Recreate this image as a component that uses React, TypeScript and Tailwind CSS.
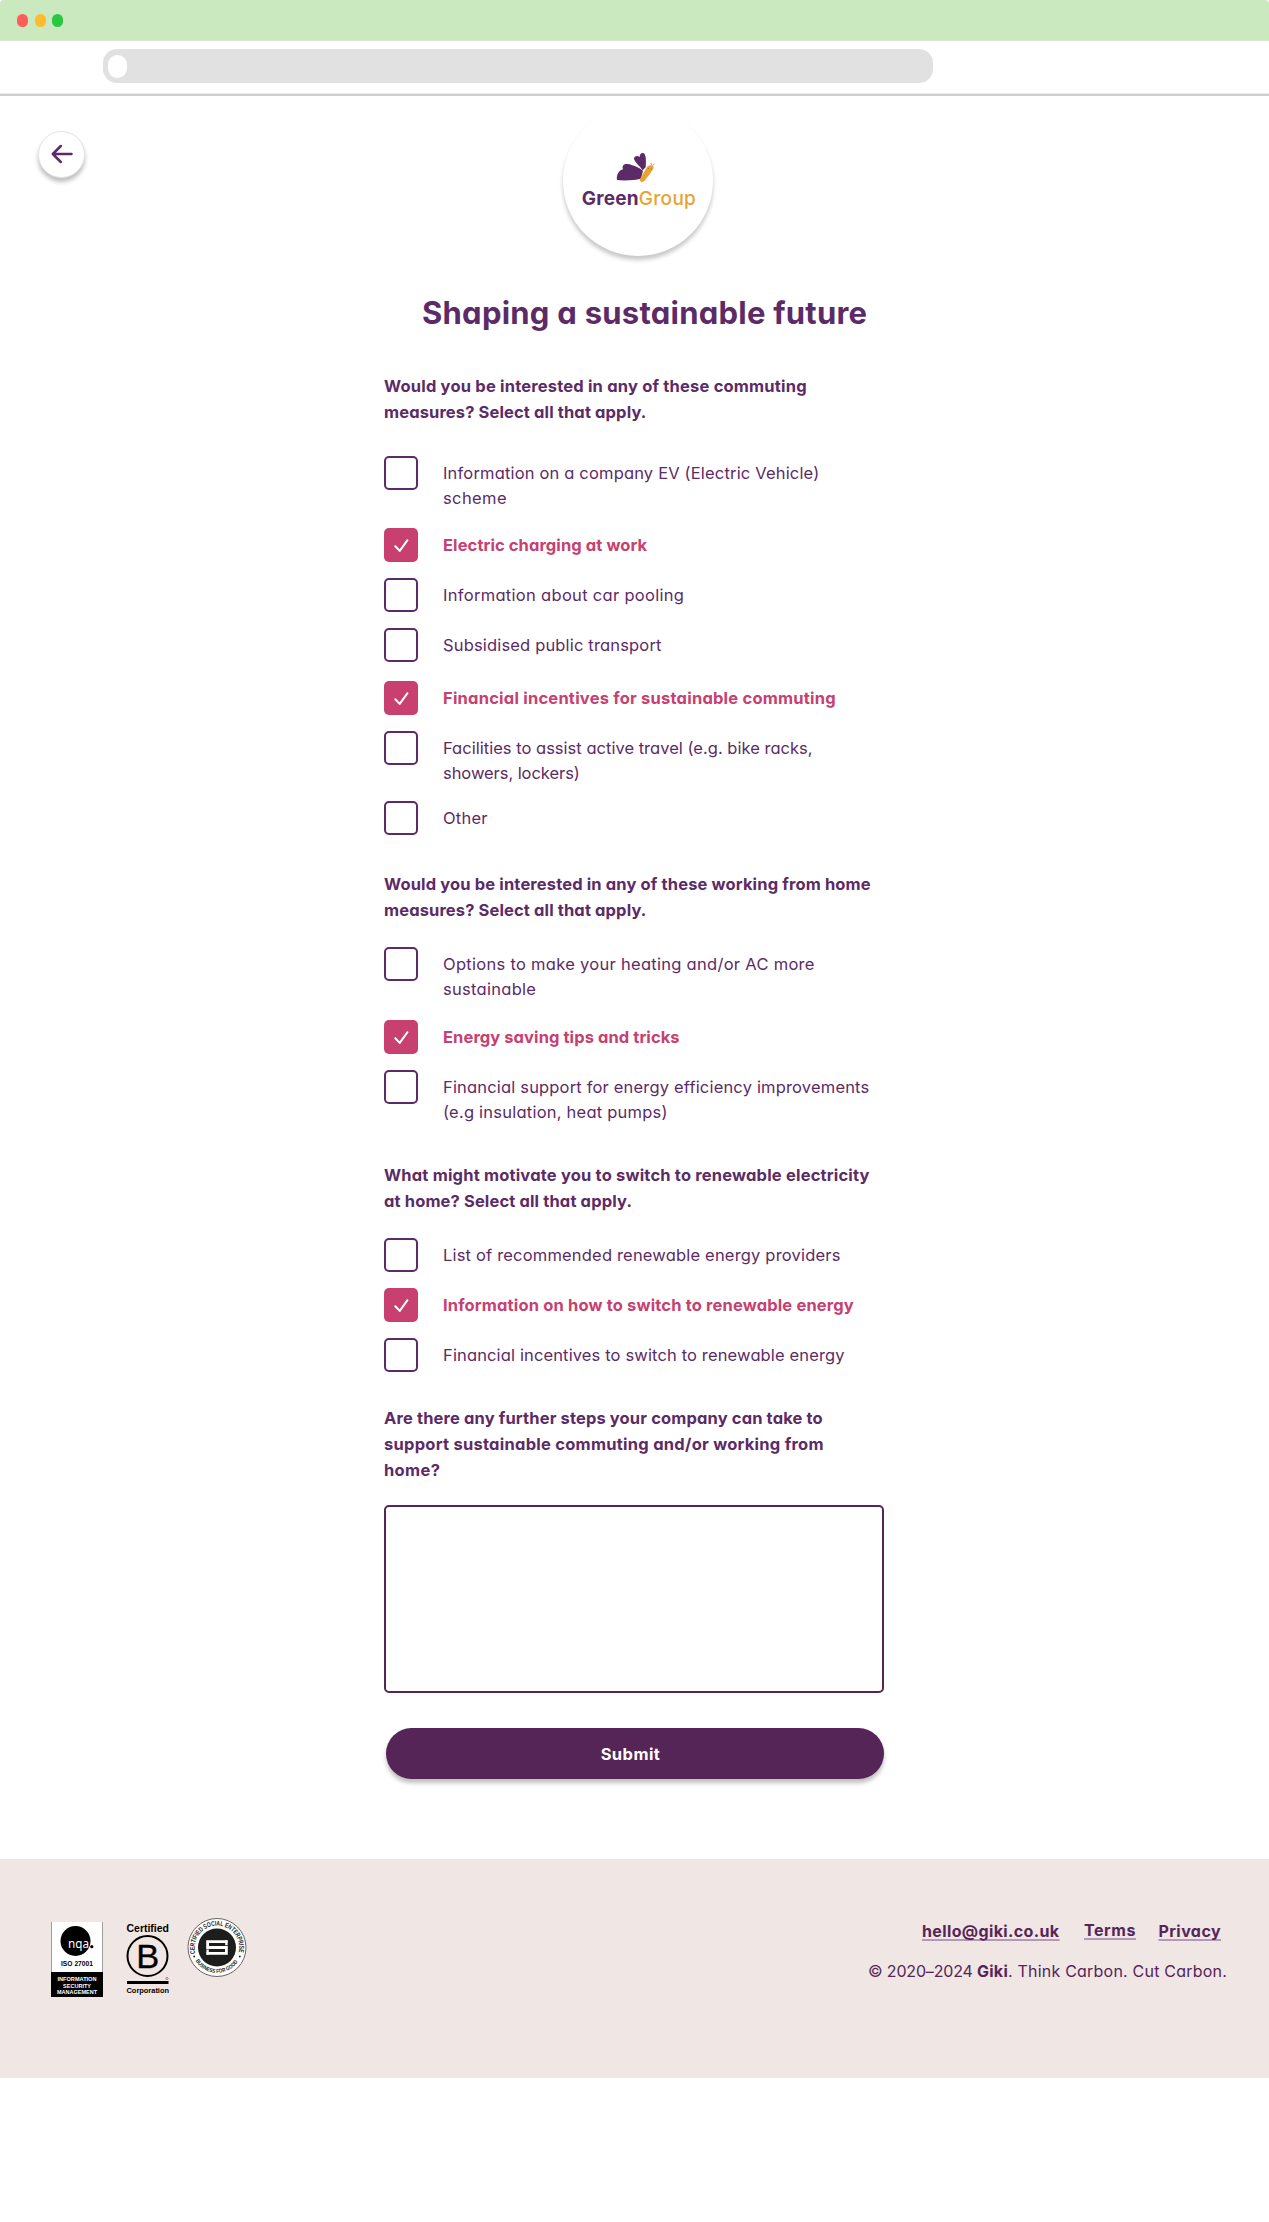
import { useState } from "react";

type TextLine = { text: string; tracking: string };
type Option = { id: string; top: string; checked?: boolean; lines: TextLine[] };
type Question = { id: string; top: string; title: TextLine[]; options: Option[] };

const QUESTIONS: Question[] = [
  {
    id: "commuting",
    top: "mt-[39.5px]",
    title: [
      { text: "Would you be interested in any of these commuting", tracking: "tracking-[0.19px]" },
      { text: "measures? Select all that apply.", tracking: "tracking-[0.123px]" },
    ],
    options: [
      {
        id: "ev",
        top: "mt-[31.5px]",
        lines: [
          { text: "Information on a company EV (Electric Vehicle)", tracking: "tracking-[0.172px]" },
          { text: "scheme", tracking: "tracking-[0.4px]" },
        ],
      },
      {
        id: "charging",
        top: "mt-[17px]",
        checked: true,
        lines: [{ text: "Electric charging at work", tracking: "tracking-[0.087px]" }],
      },
      {
        id: "pooling",
        top: "mt-4",
        lines: [{ text: "Information about car pooling", tracking: "tracking-[0.306px]" }],
      },
      {
        id: "transport",
        top: "mt-4",
        lines: [{ text: "Subsidised public transport", tracking: "tracking-[0.167px]" }],
      },
      {
        id: "incentives",
        top: "mt-[19px]",
        checked: true,
        lines: [{ text: "Financial incentives for sustainable commuting", tracking: "tracking-[0.217px]" }],
      },
      {
        id: "active",
        top: "mt-4",
        lines: [
          { text: "Facilities to assist active travel (e.g. bike racks,", tracking: "tracking-[0.02px]" },
          { text: "showers, lockers)", tracking: "tracking-[-0.06px]" },
        ],
      },
      { id: "other", top: "mt-[15px]", lines: [{ text: "Other", tracking: "tracking-[0.244px]" }] },
    ],
  },
  {
    id: "home-working",
    top: "mt-[35.5px]",
    title: [
      { text: "Would you be interested in any of these working from home", tracking: "tracking-[0.139px]" },
      { text: "measures? Select all that apply.", tracking: "tracking-[0.123px]" },
    ],
    options: [
      {
        id: "heating",
        top: "mt-[24.5px]",
        lines: [
          { text: "Options to make your heating and/or AC more", tracking: "tracking-[0.29px]" },
          { text: "sustainable", tracking: "tracking-[0.29px]" },
        ],
      },
      {
        id: "tips",
        top: "mt-[18px]",
        checked: true,
        lines: [{ text: "Energy saving tips and tricks", tracking: "tracking-[0.084px]" }],
      },
      {
        id: "support",
        top: "mt-4",
        lines: [
          { text: "Financial support for energy efficiency improvements", tracking: "tracking-[0.175px]" },
          { text: "(e.g insulation, heat pumps)", tracking: "tracking-[0.23px]" },
        ],
      },
    ],
  },
  {
    id: "renewable",
    top: "mt-[36.5px]",
    title: [
      { text: "What might motivate you to switch to renewable electricity", tracking: "tracking-[0.184px]" },
      { text: "at home? Select all that apply.", tracking: "tracking-[0.131px]" },
    ],
    options: [
      {
        id: "providers",
        top: "mt-[24.5px]",
        lines: [{ text: "List of recommended renewable energy providers", tracking: "tracking-[0.183px]" }],
      },
      {
        id: "how-to",
        top: "mt-4",
        checked: true,
        lines: [{ text: "Information on how to switch to renewable energy", tracking: "tracking-[0.155px]" }],
      },
      {
        id: "switch-incentives",
        top: "mt-4",
        lines: [{ text: "Financial incentives to switch to renewable energy", tracking: "tracking-[0.138px]" }],
      },
    ],
  },
];

const COMMENT_TITLE: TextLine[] = [
  { text: "Are there any further steps your company can take to", tracking: "tracking-[0.136px]" },
  { text: "support sustainable commuting and/or working from", tracking: "tracking-[0.253px]" },
  { text: "home?", tracking: "tracking-[0.338px]" },
];

function Lines({ lines }: { lines: TextLine[] }) {
  return (
    <>
      {lines.map((l) => (
        <span key={l.text} className={`block whitespace-nowrap ${l.tracking}`}>
          {l.text}
        </span>
      ))}
    </>
  );
}

function BrowserBar() {
  return (
    <header>
      <div className="flex h-[41px] items-center gap-[6.5px] rounded-t-[4px] border-b border-[#d5ebcb] bg-[#cbe9bf] pl-[17px]">
        <span className="h-[13px] w-[11px] rounded-full bg-[#fc5f57]" />
        <span className="h-[13px] w-[11px] rounded-full bg-[#febb2e]" />
        <span className="h-[13px] w-[11px] rounded-full bg-[#28c840]" />
      </div>
      <div className="flex h-[52px] items-start pl-[103px] pt-2">
        <div className="flex h-[34px] w-[830px] items-center rounded-[14px] bg-[#e1e1e1] pl-[5px]">
          <span className="h-[23px] w-[19px] rounded-full bg-white" />
        </div>
      </div>
      <div className="h-[3px] border-t border-[#ebebeb] bg-[#cfcfcf]" />
    </header>
  );
}

function Logo() {
  return (
    <div className="ml-[478px] mt-[10px] flex h-[150px] w-[150px] flex-col items-center rounded-full bg-white pt-[45px] shadow-[0_4px_4px_rgba(0,0,0,0.22)]">
      <svg viewBox="225 93 120 96" className="-ml-[6px] h-8 w-10">
        <path
          fill="#5c2b67"
          d="M309 152C300 144 277 134 263 132C251 130 245 138 249 148C237 150 228 166 231 180C256 183 285 180 303 176Z"
        />
        <path
          fill="#5c2b67"
          d="M308 151C300 139 281 124 282 115C284 107 294 106 299 111C299 101 304 98 310 99C320 103 318 130 317 142Z"
        />
        <path
          fill="#e9a330"
          d="M300 177L321 141C327 133 341 134 341 143C338 151 321 173 313 183C307 188 298 187 300 177Z"
        />
        <path stroke="#8a6a4a" strokeWidth="1.8" fill="none" d="M335 136L333 128M338 137L342 131" />
        <circle cx="325" cy="145" r="1.4" fill="#5c2b67" />
        <circle cx="333" cy="147" r="1.4" fill="#5c2b67" />
      </svg>
      <div className="ml-[2px] mt-[4px] flex text-[19px] leading-[24px] text-[#5c2b67]">
        <span className="font-bold tracking-[0.2px]">Green</span>
        <span className="font-medium tracking-[0.3px] text-[#e9a330]">Group</span>
      </div>
    </div>
  );
}

function OptionRow({ option, checked, onToggle }: { option: Option; checked: boolean; onToggle: () => void }) {
  return (
    <button
      type="button"
      role="checkbox"
      aria-checked={checked}
      onClick={onToggle}
      className={`flex w-full items-start text-left ${option.top}`}
    >
      {checked ? (
        <span className="size-[34px] shrink-0 rounded-[5px] bg-[#c74070]">
          <svg viewBox="0 0 34 34" className="size-[34px]">
            <path
              d="M11.3 18.2L15.7 22.9L23.5 12.2"
              fill="none"
              stroke="white"
              strokeWidth="2"
              strokeLinecap="round"
              strokeLinejoin="round"
            />
          </svg>
        </span>
      ) : (
        <span className="size-[34px] shrink-0 rounded-[5px] border-2 border-[#5c2b67]" />
      )}
      <span
        className={`ml-[25px] pt-[5px] leading-[25px] ${
          checked ? "font-bold text-[#c74070]" : "text-[#5c2b67]"
        }`}
      >
        <Lines lines={option.lines} />
      </span>
    </button>
  );
}

function NqaBadge() {
  return (
    <svg viewBox="0 0 52 75" className="mt-[4px] h-[75px] w-[52px] font-['Liberation_Sans']">
      <rect width="52" height="75" fill="#fff" />
      <path d="M0.4 0V75M51.6 0V75" stroke="#777" strokeWidth="0.8" />
      <rect y="50" width="52" height="25" fill="#000" />
      <circle cx="24.5" cy="19" r="15" fill="#000" />
      <text x="17" y="25.5" fontSize="12" textLength="21" lengthAdjust="spacingAndGlyphs" fill="#fff" className="font-['Noto_Sans']">
        nqa
      </text>
      <circle cx="40.8" cy="24.7" r="1.6" fill="#000" />
      <text x="10" y="44" fontSize="7.2" fontWeight="700" textLength="32" lengthAdjust="spacingAndGlyphs">
        ISO 27001
      </text>
      <g fill="#fff" fontSize="6" fontWeight="700">
        <text x="6.5" y="59" textLength="39" lengthAdjust="spacingAndGlyphs">INFORMATION</text>
        <text x="12" y="65.5" textLength="28" lengthAdjust="spacingAndGlyphs">SECURITY</text>
        <text x="6" y="72" textLength="40" lengthAdjust="spacingAndGlyphs">MANAGEMENT</text>
      </g>
    </svg>
  );
}

function BCorpBadge() {
  return (
    <svg viewBox="0 0 44 72" className="ml-[23px] mt-[5px] h-[72px] w-[44px] font-['Liberation_Sans']">
      <text x="0.5" y="8.8" fontSize="10.2" fontWeight="700" textLength="42.5" lengthAdjust="spacingAndGlyphs">
        Certified
      </text>
      <circle cx="21.5" cy="33" r="20" fill="none" stroke="#000" strokeWidth="2" />
      <text x="10.2" y="44.7" fontSize="33" textLength="23" lengthAdjust="spacingAndGlyphs" stroke="#000" strokeWidth="0.3">
        B
      </text>
      <circle cx="41" cy="55.5" r="1.1" fill="none" stroke="#555" strokeWidth="0.6" />
      <rect x="1" y="58" width="41.5" height="3" fill="#000" />
      <text x="0.5" y="69.5" fontSize="7.6" fontWeight="700" textLength="42.5" lengthAdjust="spacingAndGlyphs">
        Corporation
      </text>
    </svg>
  );
}

function SocialEnterpriseBadge() {
  return (
    <svg viewBox="0 0 60 60" className="ml-[17px] h-[60px] w-[60px] font-['Liberation_Sans']">
      <defs>
        <path id="seal-top" d="M8.7 36.5A22.3 22.3 0 1 1 51.3 36.5" />
        <path id="seal-bottom" d="M6.8 39.2A25 25 0 0 0 53.2 39.2" />
      </defs>
      <circle cx="30" cy="29.5" r="29" fill="#fff" stroke="#555" strokeWidth="0.9" />
      <circle cx="30" cy="29.5" r="19" fill="#1d1d1b" />
      <path
        d="M40.5 23.6H20.6V29.5H39.4V35.4H19.5"
        fill="none"
        stroke="#fff"
        strokeWidth="2.8"
        strokeLinejoin="miter"
      />
      <path d="M39.4 22.2V27.2M20.6 31.5V36.8" stroke="#fff" strokeWidth="2.4" />
      <text fontSize="6.9" fontWeight="700" fill="#1d1d1b">
        <textPath href="#seal-top" startOffset="1" textLength="80" lengthAdjust="spacingAndGlyphs">
          CERTIFIED SOCIAL ENTERPRISE
        </textPath>
      </text>
      <text fontSize="5.6" fontWeight="700" fill="#1d1d1b">
        <textPath href="#seal-bottom" startOffset="4" textLength="50" lengthAdjust="spacingAndGlyphs">
          BUSINESS FOR GOOD
        </textPath>
      </text>
      <circle cx="7.2" cy="38.5" r="0.9" fill="#1d1d1b" />
      <circle cx="52.8" cy="38.5" r="0.9" fill="#1d1d1b" />
    </svg>
  );
}

const LINK =
  "whitespace-nowrap font-bold underline decoration-[#b597b6] decoration-2 underline-offset-[2px] [text-decoration-skip-ink:none]";

function Footer() {
  return (
    <footer className="flex h-[219px] items-start justify-between bg-[#f0e6e4] pl-[51px] text-base text-[#552557]">
      <div className="flex items-start pt-[59px]">
        <NqaBadge />
        <BCorpBadge />
        <SocialEnterpriseBadge />
      </div>
      <div className="w-[401px] pt-[60px] leading-[24px]">
        <nav className="flex pl-[54px]">
          <a className={`${LINK} w-[137px] tracking-[0.378px]`}>hello@giki.co.uk</a>
          <a className={`${LINK} -mt-px ml-[25px] w-[52px] tracking-[0.569px]`}>Terms</a>
          <a className={`${LINK} ml-[22.5px] tracking-[0.431px]`}>Privacy</a>
        </nav>
        <p className="mt-4 whitespace-pre">
          <span className="tracking-[-0.169px]">© 2020–2024 </span>
          <span className="font-bold tracking-[0.258px]">Giki</span>
          <span className="tracking-[0.211px]">. Think Carbon. Cut Carbon.</span>
        </p>
      </div>
    </footer>
  );
}

export default function App() {
  const [selected, setSelected] = useState<string[]>(
    QUESTIONS.flatMap((q) => q.options.filter((o) => o.checked).map((o) => o.id)),
  );
  const toggle = (id: string) =>
    setSelected((s) => (s.includes(id) ? s.filter((x) => x !== id) : [...s, id]));

  return (
    <div className="h-[2222px] w-[1269px] bg-white font-['Inter',sans-serif] [font-feature-settings:'cv11']">
      <BrowserBar />
      <main className="h-[1763px]">
        <div className="flex items-start">
          <button
            type="button"
            aria-label="Back"
            className="ml-[38px] mt-[35px] flex h-[47px] w-[47px] items-center justify-center rounded-full border border-[#e4e4e4] bg-white shadow-[0_4px_4px_rgba(0,0,0,0.25)]"
          >
            <svg viewBox="0 0 22 20" className="-mt-px h-5 w-[22px]">
              <path
                d="M20.5 10H1.8M9.8 2L1.8 10L9.8 18"
                fill="none"
                stroke="#5c2b67"
                strokeWidth="2.5"
                strokeLinecap="round"
                strokeLinejoin="round"
              />
            </svg>
          </button>
          <Logo />
        </div>

        <form className="ml-[384px] w-[500px] text-[16.5px]" onSubmit={(e) => e.preventDefault()}>
          <h1 className="mt-[37px] whitespace-nowrap pl-[38px] text-[31px] font-bold leading-[40px] tracking-[0.246px] text-[#5c2b67]">
            Shaping a sustainable future
          </h1>
          {QUESTIONS.map((q) => (
            <section key={q.id} className={q.top}>
              <h2 className="font-bold leading-[26px] text-[#5c2b67]">
                <Lines lines={q.title} />
              </h2>
              {q.options.map((o) => (
                <OptionRow key={o.id} option={o} checked={selected.includes(o.id)} onToggle={() => toggle(o.id)} />
              ))}
            </section>
          ))}
          <h2 className="mt-[32.5px] font-bold leading-[26px] text-[#5c2b67]">
            <Lines lines={COMMENT_TITLE} />
          </h2>
          <textarea
            aria-label="Further steps"
            className="mt-[22.5px] block h-[188px] w-[500px] resize-none rounded-[5px] border-2 border-[#552557] p-3 outline-none"
          />
          <button
            type="submit"
            className="ml-[2px] mt-[35px] flex h-[51px] w-[498px] items-center justify-center rounded-full bg-[#552557] pr-[9px] pt-px font-bold tracking-[0.445px] text-white shadow-[0_4px_4px_rgba(0,0,0,0.25)]"
          >
            Submit
          </button>
        </form>
      </main>
      <Footer />
    </div>
  );
}
